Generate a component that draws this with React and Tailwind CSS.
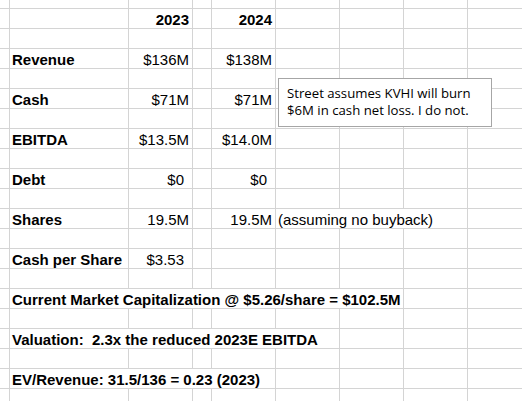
import React from "react";

const rows = [
  { h: "h-[9px]", cells: [] },
  {
    cells: [
      { col: 3, text: "2023", bold: true, right: true },
      { col: 5, text: "2024", bold: true, right: true },
    ],
  },
  { cells: [] },
  {
    cells: [
      { col: 2, text: "Revenue", bold: true },
      { col: 3, text: "$136M", right: true },
      { col: 5, text: "$138M", right: true },
    ],
  },
  { cells: [] },
  {
    cells: [
      { col: 2, text: "Cash", bold: true },
      { col: 3, text: "$71M", right: true },
      { col: 5, text: "$71M", right: true },
    ],
  },
  { cells: [] },
  {
    cells: [
      { col: 2, text: "EBITDA", bold: true },
      { col: 3, text: "$13.5M", right: true },
      { col: 5, text: "$14.0M", right: true },
    ],
  },
  { cells: [] },
  {
    cells: [
      { col: 2, text: "Debt", bold: true },
      { col: 3, text: "$0", right: true, pad: true },
      { col: 5, text: "$0", right: true, pad: true },
    ],
  },
  { cells: [] },
  {
    cells: [
      { col: 2, text: "Shares", bold: true },
      { col: 3, text: "19.5M", right: true },
      { col: 5, text: "19.5M", right: true },
      { col: 6, span: 3, text: "(assuming no buyback)" },
    ],
  },
  { cells: [] },
  {
    cells: [
      { col: 2, text: "Cash per Share", bold: true },
      { col: 3, text: "$3.53", right: true, pad: true },
    ],
  },
  { cells: [] },
  {
    cells: [
      {
        col: 2,
        span: 6,
        text: "Current Market Capitalization @ $5.26/share = $102.5M",
        bold: true,
      },
    ],
  },
  { cells: [] },
  {
    cells: [
      { col: 2, span: 5, text: "Valuation:  2.3x the reduced 2023E EBITDA", bold: true },
    ],
  },
  { cells: [] },
  {
    cells: [
      { col: 2, span: 4, text: "EV/Revenue: 31.5/136 = 0.23 (2023)", bold: true },
    ],
  },
  { cells: [] },
];

const spanClass = {
  1: "col-span-1",
  3: "col-span-3",
  4: "col-span-4",
  5: "col-span-5",
  6: "col-span-6",
};

function Row({ row }) {
  const out = [];
  let c = 1;
  while (c <= 9) {
    const cell = row.cells.find((x) => x.col === c);
    const span = cell?.span || 1;
    out.push(
      <div
        key={c}
        className={`${spanClass[span]} flex items-end overflow-visible border-b border-r border-[#d4d4d4] whitespace-pre leading-[17px] ${
          cell?.right ? "justify-end" : "justify-start"
        } ${cell?.right ? (cell?.pad ? "pr-[8px]" : "pr-[3px]") : "pl-[2px]"} ${
          cell?.bold ? "font-bold" : ""
        }`}
      >
        {cell?.text}
      </div>
    );
    c += span;
  }
  return (
    <div
      className={`grid grid-cols-[10px_119px_64px_19px_64px_64px_64px_64px_64px] ${
        row.h || "h-[20px]"
      }`}
    >
      {out}
    </div>
  );
}

export default function App() {
  return (
    <div className="relative h-[401px] w-[522px] overflow-hidden bg-white text-[15px] text-black font-['Liberation_Sans',Arial,sans-serif]">
      {rows.map((row, i) => (
        <Row key={i} row={row} />
      ))}
      <div className="absolute left-[278px] top-[78px] h-[49px] w-[214px] border border-[#a6a6a6] bg-white pl-[8px] pt-[6px] text-[13.2px] leading-[17px] text-black font-['Open_Sans','Noto_Sans',sans-serif]">
        <div>Street assumes KVHI will burn</div>
        <div>$6M in cash net loss. I do not.</div>
      </div>
    </div>
  );
}
